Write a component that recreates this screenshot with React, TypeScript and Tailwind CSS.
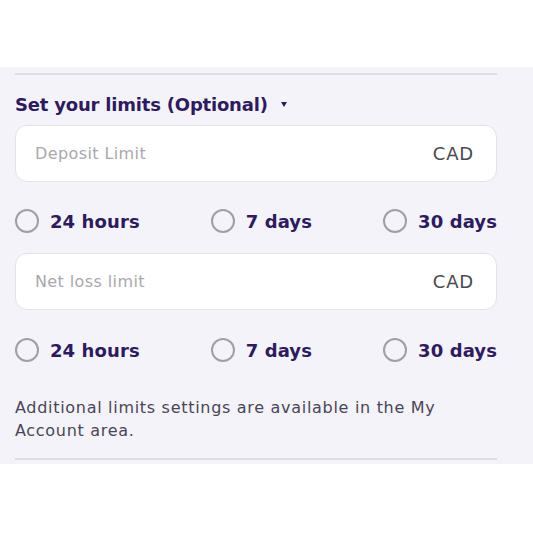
import { useState } from 'react'

const periods = ['24 hours', '7 days', '30 days']

function RadioRow() {
  const [value, setValue] = useState('')
  return (
    <div className="flex items-center justify-between h-[26px]">
      {periods.map((p) => (
        <label key={p} className="flex items-center gap-[11px] cursor-pointer" onClick={() => setValue(p)}>
          <span
            className={`w-[24px] h-[24px] rounded-full border-2 bg-transparent ${
              value === p ? 'border-[#2e1b5e]' : 'border-[#a09fa6]'
            }`}
          />
          <span className="text-[18px] font-bold text-[#2e1b5e] tracking-[0.1px]">{p}</span>
        </label>
      ))}
    </div>
  )
}

function LimitInput({ placeholder }: { placeholder: string }) {
  return (
    <div className="h-[57px] rounded-[12px] border border-[#e3e2e9] bg-white flex items-center justify-between pl-[19px] pr-[22px]">
      <input
        type="text"
        placeholder={placeholder}
        className="flex-1 bg-transparent outline-none text-[16px] tracking-[0.4px] text-[#333] placeholder:text-[#a9a8ae]"
      />
      <span className="text-[18px] tracking-[0.8px] text-[#4a4952]">CAD</span>
    </div>
  )
}

export default function App() {
  return (
    <div className="min-h-screen bg-white" style={{ fontFamily: '"DejaVu Sans", Inter, sans-serif' }}>
      <div className="h-[67px] bg-white" />
      <div className="w-full bg-[#f4f3f9] pl-[15px] pr-[36px] pt-[6px] pb-[4px]">
        <div className="h-[2px] bg-[#dedde5]" />
        <div className="mt-[17px] h-6 flex items-center gap-[13px]">
          <h2 className="text-[18px] font-bold text-[#2e1b5e] tracking-[-0.2px]">Set your limits (Optional)</h2>
          <span className="w-0 h-0 border-l-[3px] border-r-[3px] border-t-[5px] border-l-transparent border-r-transparent border-t-[#2e1b5e]" />
        </div>
        <div className="mt-[9px]">
          <LimitInput placeholder="Deposit Limit" />
        </div>
        <div className="mt-[26px]">
          <RadioRow />
        </div>
        <div className="mt-[19px]">
          <LimitInput placeholder="Net loss limit" />
        </div>
        <div className="mt-[27px]">
          <RadioRow />
        </div>
        <p className="mt-[33px] max-w-[450px] text-[16px] leading-[23px] tracking-[0.7px] text-[#4a4556]">
          Additional limits settings are available in the My Account area.
        </p>
        <div className="mt-[16px] h-[2px] bg-[#dedde5]" />
      </div>
    </div>
  )
}
